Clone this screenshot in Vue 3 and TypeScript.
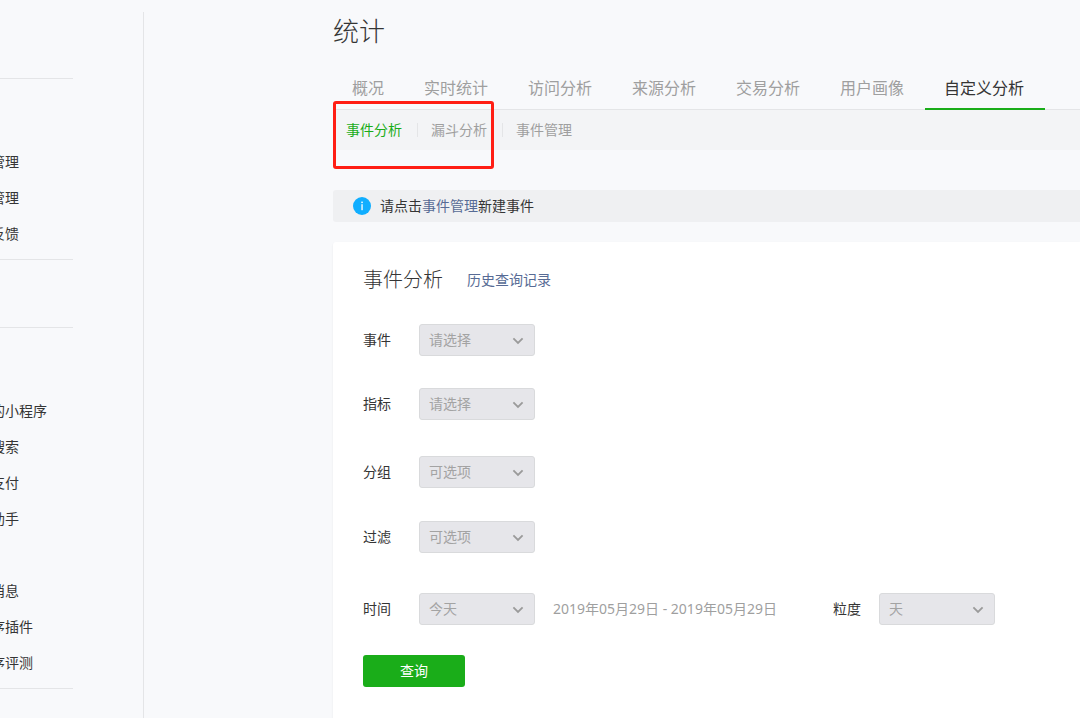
<script setup lang="ts">
import { ref } from 'vue'

interface MenuGroup {
  id: string
  items: string[]
}
interface Field {
  id: string
  label: string
  value: string
}

const menu: MenuGroup[] = [
  { id: 'home', items: [] },
  { id: 'manage', items: ['管理', '管理', '反馈'] },
  { id: 'stats', items: [] },
  { id: 'features', items: ['的小程序', '搜索', '支付', '助手', '', '消息', '序插件', '序评测'] },
]

const tabs: string[] = ['概况', '实时统计', '访问分析', '来源分析', '交易分析', '用户画像', '自定义分析']
const subTabs: string[] = ['事件分析', '漏斗分析', '事件管理']
const activeTab = ref('自定义分析')
const activeSub = ref('事件分析')

const fields: Field[] = [
  { id: 'event', label: '事件', value: '请选择' },
  { id: 'metric', label: '指标', value: '请选择' },
  { id: 'split', label: '分组', value: '可选项' },
  { id: 'filter', label: '过滤', value: '可选项' },
]
</script>

<template>
  <div class="page">
    <aside class="sidebar">
      <nav class="menu">
        <ul v-for="group in menu" :key="group.id" class="group" :class="{ filled: group.items.length }">
          <li v-for="(item, i) in group.items" :key="i" class="menu-item">
            <a v-if="item" href="#">{{ item }}</a>
          </li>
        </ul>
      </nav>
    </aside>

    <main class="main">
      <h1 class="title">统计</h1>

      <div class="nav-wrap">
        <nav class="tabs">
          <a
            v-for="tab in tabs"
            :key="tab"
            href="#"
            class="tab"
            :class="{ active: tab === activeTab }"
            @click.prevent="activeTab = tab"
            >{{ tab }}</a
          >
        </nav>
        <nav class="subtabs">
          <a
            v-for="sub in subTabs"
            :key="sub"
            href="#"
            class="subtab"
            :class="{ active: sub === activeSub }"
            @click.prevent="activeSub = sub"
            >{{ sub }}</a
          >
        </nav>
        <div class="highlight" aria-hidden="true"></div>
      </div>

      <div class="notice">
        <svg class="info" viewBox="0 0 18 18" aria-hidden="true">
          <circle cx="9" cy="9" r="9" fill="#10aeff" />
          <rect x="8.4" y="7.2" width="1.3" height="6" fill="#fff" />
          <rect x="8.3" y="4.6" width="1.5" height="1.5" fill="#fff" />
        </svg>
        <p>请点击<a href="#">事件管理</a>新建事件</p>
      </div>

      <section class="card">
        <header class="card-head">
          <h2>事件分析</h2>
          <a href="#">历史查询记录</a>
        </header>

        <form @submit.prevent>
          <div v-for="field in fields" :key="field.id" class="row" :class="field.id">
            <label :for="field.id">{{ field.label }}</label>
            <span class="select">
              <select :id="field.id" disabled>
                <option>{{ field.value }}</option>
              </select>
              <svg viewBox="0 0 12 8" aria-hidden="true"><path d="M1.4 1.4 6 6l4.6-4.6" /></svg>
            </span>
          </div>
          <div class="row time">
            <label for="time">时间</label>
            <span class="select">
              <select id="time" disabled>
                <option>今天</option>
              </select>
              <svg viewBox="0 0 12 8" aria-hidden="true"><path d="M1.4 1.4 6 6l4.6-4.6" /></svg>
            </span>
            <span class="range">2019年05月29日 - 2019年05月29日</span>
            <label for="grain" class="grain">粒度</label>
            <span class="select">
              <select id="grain" disabled>
                <option>天</option>
              </select>
              <svg viewBox="0 0 12 8" aria-hidden="true"><path d="M1.4 1.4 6 6l4.6-4.6" /></svg>
            </span>
          </div>
          <button type="submit" class="submit">查询</button>
        </form>
      </section>
    </main>
  </div>
</template>

<style>
body {
  background: #f8f9fb;
}
</style>

<style scoped>
.page {
  display: flex;
  min-height: 100vh;
  overflow: hidden;
  background: #f8f9fb;
  color: #353535;
  font: 14px/20px 'Noto Sans', 'Noto Sans CJK SC', sans-serif;
}
.page * {
  box-sizing: border-box;
}
a {
  color: inherit;
  text-decoration: none;
}
.sidebar {
  flex: none;
  width: 144px;
  padding-top: 12px;
  display: flex;
}
.menu {
  flex: 1;
  border-right: 1px solid #e4e5e7;
}
.group {
  list-style: none;
  margin: 0;
  padding: 0;
  width: 73px;
  height: 68px;
  border-bottom: 1px solid #e4e5e7;
}
.group:first-child {
  height: 67px;
}
.group.filled {
  height: auto;
  padding: 65px 0 7px;
}
.menu-item {
  height: 36px;
  line-height: 36px;
  margin-left: -9px;
  white-space: nowrap;
}
.main {
  flex: 1;
  min-width: 0;
  margin-left: 189px;
  display: flex;
  flex-direction: column;
}
.title {
  margin: 13px 0 19px;
  font-size: 26px;
  line-height: 36px;
  font-weight: 300;
}
.nav-wrap {
  position: relative;
  margin-bottom: 40px;
}
.tabs {
  display: flex;
  height: 42px;
  border-bottom: 1px solid #e4e5e7;
}
.tab {
  flex: none;
  height: 42px;
  padding: 0 21px 0 19px;
  font-size: 16px;
  line-height: 40px;
  color: #9f9f9f;
}
.tab.active {
  color: #353535;
  border-bottom: 2px solid #1aad19;
}
.subtabs {
  display: flex;
  align-items: center;
  height: 40px;
  background: #f3f4f6;
}
.subtab {
  height: 14px;
  padding: 0 15px 0 13px;
  line-height: 14px;
  color: #9f9f9f;
  border-right: 1px solid #e4e5e7;
}
.subtab:last-child {
  border-right: 0;
}
.subtab.active {
  color: #1aad19;
}
.highlight {
  position: absolute;
  left: 0;
  top: 33px;
  width: 161px;
  height: 68px;
  border: 3px solid #ff1e14;
  border-radius: 3px;
  pointer-events: none;
}
.notice {
  display: flex;
  align-items: center;
  gap: 9px;
  height: 32px;
  padding-left: 20px;
  margin-bottom: 20px;
  background: #eff0f2;
  border-radius: 3px 0 0 3px;
}
.notice p {
  margin: 0;
}
.notice a,
.card-head a {
  color: #576b95;
}
.info {
  width: 18px;
  height: 18px;
}
.card {
  flex: 1;
  padding: 22px 0 31px 30px;
  background: #fff;
  border-radius: 3px 0 0 0;
  box-shadow: 0 1px 2px rgba(0, 0, 0, 0.08);
}
.card-head {
  display: flex;
  align-items: center;
  gap: 24px;
  height: 32px;
  margin-bottom: 28px;
}
.card-head h2 {
  margin: 0;
  font-size: 20px;
  line-height: 32px;
  font-weight: 300;
}
.row {
  display: flex;
  align-items: center;
  height: 32px;
  margin-bottom: 32px;
}
.row.metric {
  margin-bottom: 36px;
}
.row.split {
  margin-bottom: 33px;
}
.row.filter {
  margin-bottom: 40px;
}
.row.time {
  margin-bottom: 30px;
}
.row label {
  width: 56px;
}
.row label.grain {
  width: 46px;
  margin-left: 50px;
}
.range {
  min-width: 230px;
  margin-left: 18px;
  color: #9f9f9f;
  white-space: nowrap;
}
.select {
  position: relative;
  width: 116px;
}
.select select {
  display: block;
  appearance: none;
  width: 100%;
  height: 32px;
  padding: 0 30px 0 9px;
  font: inherit;
  color: #a3a3a3;
  background: #e6e6ea;
  border: 1px solid #d9dadc;
  border-radius: 3px;
  opacity: 1;
}
.select svg {
  position: absolute;
  right: 11px;
  top: 13px;
  width: 12px;
  height: 8px;
  fill: none;
  stroke: #9a9a9a;
  stroke-width: 1.8;
}
.submit {
  display: block;
  width: 102px;
  height: 32px;
  padding: 0;
  font: inherit;
  color: #fff;
  background: #1aad19;
  border: 0;
  border-radius: 3px;
}
</style>
